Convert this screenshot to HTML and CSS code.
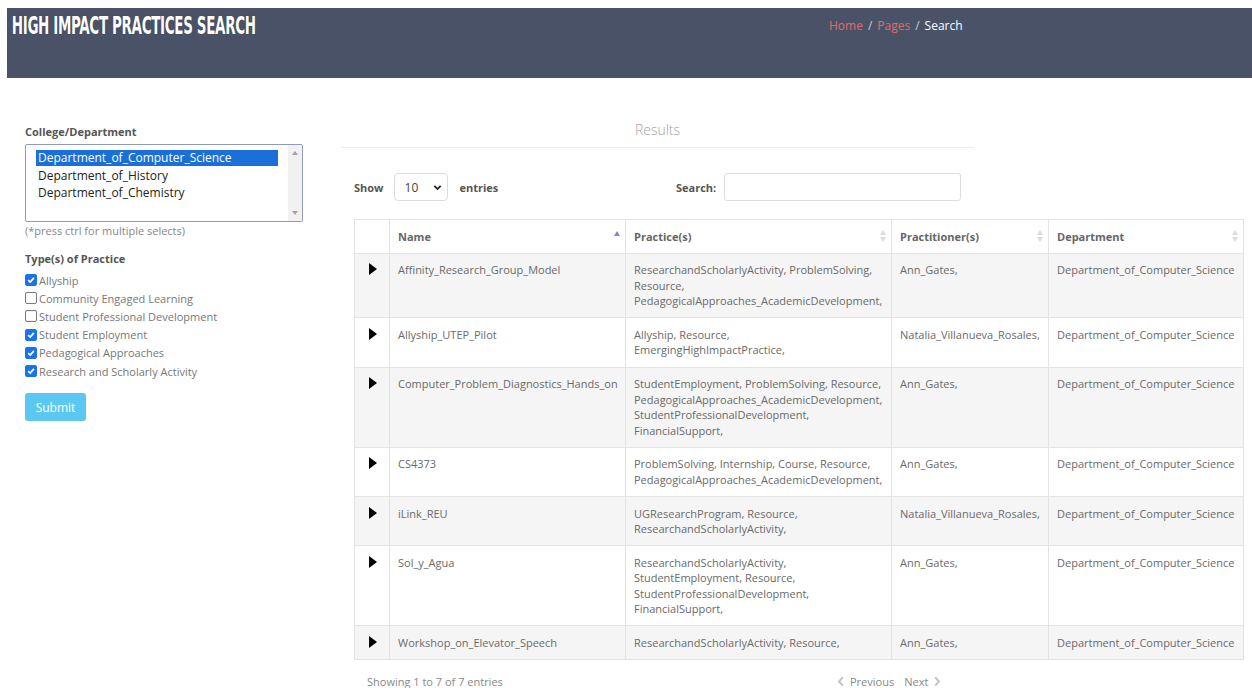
FILE: index.html
```html
<!DOCTYPE html>
<html lang="en">
<head>
<meta charset="utf-8">
<title>High Impact Practices Search</title>
<link rel="stylesheet" href="styles.css">
</head>
<body>
<header class="topbar">
  <h1 class="site-title">HIGH IMPACT PRACTICES SEARCH</h1>
  <nav class="crumbs">
    <a class="crumb-link" href="#">Home</a><span class="crumb-sep">/</span><a class="crumb-link" href="#">Pages</a><span class="crumb-sep">/</span><span class="crumb-current">Search</span>
  </nav>
</header>

<main class="page">
  <aside class="filters">
    <div class="field-label">College/Department</div>
    <div class="listbox">
      <ul class="listbox-options">
        <li class="listbox-option is-selected">Department_of_Computer_Science</li>
        <li class="listbox-option">Department_of_History</li>
        <li class="listbox-option">Department_of_Chemistry</li>
      </ul>
      <div class="listbox-scroll">
        <span class="scroll-arrow up"></span>
        <span class="scroll-arrow down"></span>
      </div>
    </div>
    <div class="hint">(*press ctrl for multiple selects)</div>

    <div class="field-label practice-label">Type(s) of Practice</div>
    <ul class="checks">
      <li class="check-row"><span class="box is-checked"><svg viewBox="0 0 12 12"><path d="M2.6 6.2 5 8.5 9.5 3.4" /></svg></span>Allyship</li>
      <li class="check-row"><span class="box"></span>Community Engaged Learning</li>
      <li class="check-row"><span class="box"></span>Student Professional Development</li>
      <li class="check-row"><span class="box is-checked"><svg viewBox="0 0 12 12"><path d="M2.6 6.2 5 8.5 9.5 3.4" /></svg></span>Student Employment</li>
      <li class="check-row"><span class="box is-checked"><svg viewBox="0 0 12 12"><path d="M2.6 6.2 5 8.5 9.5 3.4" /></svg></span>Pedagogical Approaches</li>
      <li class="check-row"><span class="box is-checked"><svg viewBox="0 0 12 12"><path d="M2.6 6.2 5 8.5 9.5 3.4" /></svg></span>Research and Scholarly Activity</li>
    </ul>
    <button class="submit" type="button">Submit</button>
  </aside>

  <section class="results">
    <div class="results-head">Results</div>

    <div class="table-wrap">
      <div class="controls">
        <div class="length">
          <span class="ctl-label">Show</span>
          <span class="length-select">10<svg class="chev" viewBox="0 0 10 10"><path d="M1.5 3.2 5 6.7 8.5 3.2" /></svg></span>
          <span class="ctl-label">entries</span>
        </div>
        <div class="filter">
          <span class="ctl-label">Search:</span>
          <span class="search-input"></span>
        </div>
      </div>

      <table class="grid">
        <colgroup>
          <col class="c-toggle"><col class="c-name"><col class="c-practice"><col class="c-people"><col class="c-dept">
        </colgroup>
        <thead>
          <tr>
            <th></th>
            <th class="sort asc">Name</th>
            <th class="sort">Practice(s)</th>
            <th class="sort">Practitioner(s)</th>
            <th class="sort">Department</th>
          </tr>
        </thead>
        <tbody>
          <tr>
            <td class="toggle"><span class="tri"></span></td>
            <td>Affinity_Research_Group_Model</td>
            <td>ResearchandScholarlyActivity, ProblemSolving, Resource, PedagogicalApproaches_AcademicDevelopment,</td>
            <td>Ann_Gates,</td>
            <td>Department_of_Computer_Science</td>
          </tr>
          <tr>
            <td class="toggle"><span class="tri"></span></td>
            <td>Allyship_UTEP_Pilot</td>
            <td>Allyship, Resource, EmergingHighImpactPractice,</td>
            <td>Natalia_Villanueva_Rosales,</td>
            <td>Department_of_Computer_Science</td>
          </tr>
          <tr>
            <td class="toggle"><span class="tri"></span></td>
            <td>Computer_Problem_Diagnostics_Hands_on</td>
            <td>StudentEmployment, ProblemSolving, Resource, PedagogicalApproaches_AcademicDevelopment, StudentProfessionalDevelopment, FinancialSupport,</td>
            <td>Ann_Gates,</td>
            <td>Department_of_Computer_Science</td>
          </tr>
          <tr>
            <td class="toggle"><span class="tri"></span></td>
            <td>CS4373</td>
            <td>ProblemSolving, Internship, Course, Resource, PedagogicalApproaches_AcademicDevelopment,</td>
            <td>Ann_Gates,</td>
            <td>Department_of_Computer_Science</td>
          </tr>
          <tr>
            <td class="toggle"><span class="tri"></span></td>
            <td>iLink_REU</td>
            <td>UGResearchProgram, Resource, ResearchandScholarlyActivity,</td>
            <td>Natalia_Villanueva_Rosales,</td>
            <td>Department_of_Computer_Science</td>
          </tr>
          <tr>
            <td class="toggle"><span class="tri"></span></td>
            <td>Sol_y_Agua</td>
            <td>ResearchandScholarlyActivity, StudentEmployment, Resource, StudentProfessionalDevelopment, FinancialSupport,</td>
            <td>Ann_Gates,</td>
            <td>Department_of_Computer_Science</td>
          </tr>
          <tr>
            <td class="toggle"><span class="tri"></span></td>
            <td>Workshop_on_Elevator_Speech</td>
            <td>ResearchandScholarlyActivity, Resource,</td>
            <td>Ann_Gates,</td>
            <td>Department_of_Computer_Science</td>
          </tr>
        </tbody>
      </table>

      <div class="table-foot">
        <span class="info">Showing 1 to 7 of 7 entries</span>
        <span class="pager">
          <svg class="pg-chev" viewBox="0 0 8 12"><path d="M6 1.5 1.8 6 6 10.5" /></svg><span class="pg-link">Previous</span>
          <span class="pg-link">Next</span><svg class="pg-chev" viewBox="0 0 8 12"><path d="M2 1.5 6.2 6 2 10.5" /></svg>
        </span>
      </div>
    </div>
  </section>
</main>
</body>
</html>
```

FILE: styles.css
```css
* {
  box-sizing: border-box;
}

html, body {
  margin: 0;
  padding: 0;
  background: #fff;
}

body {
  font-family: "Open Sans", "Noto Sans", sans-serif;
  font-size: 11px;
  color: #666;
  overflow: hidden;
}

ul {
  list-style: none;
  margin: 0;
  padding: 0;
}

/* ---------- top bar ---------- */
.topbar {
  margin: 8px 0 0 7px;
  height: 70px;
  background: #4a5268;
  display: flex;
  align-items: flex-start;
  position: relative;
}

.site-title {
  margin: 0;
  padding: 3px 0 0 8px;
  font-family: "DejaVu Sans", sans-serif;
  font-stretch: condensed;
  font-weight: bold;
  font-size: 25px;
  line-height: 30px;
  color: #fff;
  letter-spacing: -0.6px;
  white-space: nowrap;
  transform: scaleX(0.6);
  transform-origin: left top;
  text-shadow: 0 0 1px #1d2230;
  width: 260px;
}

.crumbs {
  margin-left: 562px;
  padding-top: 10px;
  font-size: 12px;
  line-height: 16px;
  white-space: nowrap;
}

.crumb-link {
  color: #e46a6a;
  text-decoration: none;
}

.crumb-sep {
  color: #c9ccd4;
  padding: 0 5px;
}

.crumb-current {
  color: #fff;
}

/* ---------- page layout ---------- */
.page {
  display: flex;
  padding: 0 0 0 25px;
}

.filters {
  width: 316px;
  flex: none;
  padding-top: 46px;
}

.field-label {
  font-weight: bold;
  color: #555;
  font-size: 11px;
  line-height: 16px;
}

.listbox {
  margin-top: 4px;
  width: 278px;
  height: 78px;
  border: 1px solid #8e9cb8;
  border-radius: 2px;
  display: flex;
  padding: 5px 0 0 10px;
}

.listbox-options {
  flex: 1;
  padding-right: 10px;
}

.listbox-option {
  font-size: 12px;
  line-height: 17px;
  color: #222;
  padding-left: 2px;
}

.listbox-option.is-selected {
  background: #1a6fd8;
  color: #fff;
  height: 16px;
  line-height: 16px;
  margin-bottom: 1px;
}

.listbox-scroll {
  width: 14px;
  margin: -5px 0 0;
  background: #f1f1f1;
  display: flex;
  flex-direction: column;
  justify-content: space-between;
  align-items: center;
  padding: 6px 0 6px;
}

.scroll-arrow {
  width: 0;
  height: 0;
  border-left: 3px solid transparent;
  border-right: 3px solid transparent;
}

.scroll-arrow.up {
  border-bottom: 4px solid #a3a3a3;
}

.scroll-arrow.down {
  border-top: 4px solid #a3a3a3;
}

.hint {
  color: #888;
  line-height: 16px;
  margin-top: 1px;
}

.practice-label {
  margin-top: 12px;
}

.checks {
  margin-top: 4px;
}

.check-row {
  display: flex;
  align-items: center;
  height: 18.2px;
  color: #777;
  font-size: 11px;
}

.box {
  width: 12px;
  height: 12px;
  border: 1px solid #777;
  border-radius: 2px;
  margin-right: 2px;
  flex: none;
  display: inline-flex;
  background: #fff;
}

.box.is-checked {
  background: #1a73e8;
  border-color: #1a73e8;
}

.box svg {
  width: 10px;
  height: 10px;
  fill: none;
  stroke: #fff;
  stroke-width: 2;
}

.submit {
  margin-top: 13px;
  width: 61px;
  height: 28px;
  border: none;
  border-radius: 3px;
  background: #5bc8f1;
  color: #fff;
  font-family: "Open Sans", sans-serif;
  font-size: 12px;
  padding: 0;
}

/* ---------- results ---------- */
.results {
  flex: 1;
  padding-top: 42px;
}

.results-head {
  width: 633px;
  text-align: center;
  font-size: 14px;
  line-height: 20px;
  color: #a3a3a3;
  font-weight: 300;
  padding-bottom: 7px;
  border-bottom: 1px solid #eee;
}

.table-wrap {
  margin-left: 13px;
  width: 889px;
}

.controls {
  display: flex;
  align-items: center;
  margin-top: 25px;
  height: 28px;
}

.length {
  display: flex;
  align-items: center;
  width: 322px;
}

.ctl-label {
  font-weight: bold;
  color: #555;
}

.length-select {
  margin: 0 12px 0 10px;
  width: 54px;
  height: 28px;
  border: 1px solid #dcdcdc;
  border-radius: 4px;
  display: flex;
  align-items: center;
  justify-content: space-between;
  padding: 0 5px 0 10px;
  font-size: 12px;
  color: #444;
}

.chev {
  width: 9px;
  height: 9px;
  fill: none;
  stroke: #222;
  stroke-width: 2;
}

.filter {
  display: flex;
  align-items: center;
}

.search-input {
  margin-left: 8px;
  width: 237px;
  height: 28px;
  border: 1px solid #dcdcdc;
  border-radius: 3px;
}

/* ---------- data table ---------- */
.grid {
  margin-top: 18px;
  width: 889px;
  border-collapse: collapse;
  table-layout: fixed;
}

.c-toggle { width: 35px; }
.c-name { width: 236px; }
.c-practice { width: 266px; }
.c-people { width: 157px; }
.c-dept { width: 195px; }

.grid th,
.grid td {
  border: 1px solid #e3e3e3;
  text-align: left;
  vertical-align: top;
  line-height: 15.5px;
  padding: 8.6px 8px 8.6px;
}

.grid th {
  font-weight: bold;
  color: #666;
  position: relative;
}

.grid td {
  color: #6a6a6a;
}

.grid tbody tr:nth-child(odd) td {
  background: #f5f5f5;
}

/* sort indicators drawn at the right edge of each header */
.sort::before,
.sort::after {
  content: "";
  position: absolute;
  right: 5px;
  width: 0;
  height: 0;
  border-left: 3.5px solid transparent;
  border-right: 3.5px solid transparent;
}

.sort::before {
  top: 10px;
  border-bottom: 5px solid #dcdcdc;
}

.sort::after {
  top: 17px;
  border-top: 5px solid #dcdcdc;
}

.sort.asc::before {
  top: 11px;
  border-bottom-color: #8585d1;
}

.sort.asc::after {
  display: none;
}

.toggle {
  padding-left: 14px !important;
}

.tri {
  display: block;
  margin-top: 1px;
  width: 0;
  height: 0;
  border-top: 6.5px solid transparent;
  border-bottom: 6.5px solid transparent;
  border-left: 8px solid #000;
}

.table-foot {
  display: flex;
  align-items: center;
  margin-top: 13px;
  padding-left: 13px;
  height: 16px;
  color: #888;
}

.info {
  width: 470px;
}

.pager {
  display: flex;
  align-items: center;
  color: #888;
}

.pg-link {
  padding: 0 5px;
}

.pg-chev {
  width: 8px;
  height: 11px;
  fill: none;
  stroke: #c4c4c4;
  stroke-width: 2.2;
}
```
